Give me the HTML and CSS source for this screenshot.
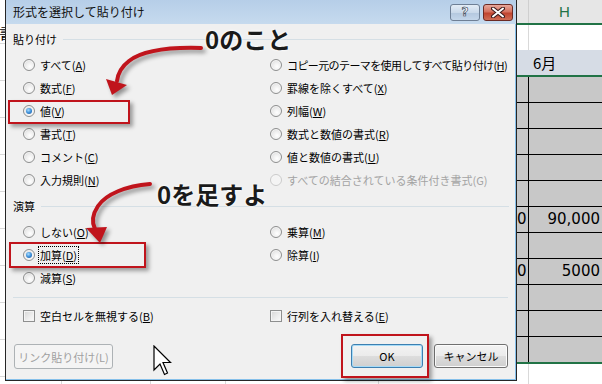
FILE: index.html
```html
<!DOCTYPE html>
<html lang="ja">
<head>
<meta charset="utf-8">
<link rel="stylesheet" href="styles.css">
</head>
<body>
<div class="screen">
  <div class="left-strip">
    <div class="ls-cell ls-first"><span class="ls-char">書</span></div>
    <div class="ls-cell"></div><div class="ls-cell"></div><div class="ls-cell"></div>
    <div class="ls-cell"></div><div class="ls-cell"></div><div class="ls-cell"></div>
    <div class="ls-cell"></div><div class="ls-cell"></div><div class="ls-cell"></div>
  </div>

  <div class="mid">
    <div class="dialog">
      <div class="titlebar">
        <span class="title">形式を選択して貼り付け</span>
        <div class="tbtns">
          <span class="tb help">?</span>
          <span class="tb close">
            <svg width="14" height="11" viewBox="0 0 14 11"><path d="M2 1.5 L12 9.5 M12 1.5 L2 9.5" stroke="#3a1a1a" stroke-width="4" stroke-linecap="round"/><path d="M2 1.5 L12 9.5 M12 1.5 L2 9.5" stroke="#fff" stroke-width="2" stroke-linecap="round"/></svg>
          </span>
        </div>
      </div>
      <div class="body">
        <div class="group-head"><span>貼り付け</span><i class="rule"></i></div>
        <div class="opts">
          <div class="opt"><span class="radio"></span><span>すべて(<u>A</u>)</span></div>
          <div class="opt"><span class="radio"></span><span class="tight">コピー元のテーマを使用してすべて貼り付け(<u>H</u>)</span></div>
          <div class="opt"><span class="radio"></span><span>数式(<u>F</u>)</span></div>
          <div class="opt"><span class="radio"></span><span>罫線を除くすべて(<u>X</u>)</span></div>
          <div class="opt"><span class="radio on"></span><span>値(<u>V</u>)</span></div>
          <div class="opt"><span class="radio"></span><span>列幅(<u>W</u>)</span></div>
          <div class="opt"><span class="radio"></span><span>書式(<u>T</u>)</span></div>
          <div class="opt"><span class="radio"></span><span>数式と数値の書式(<u>R</u>)</span></div>
          <div class="opt"><span class="radio"></span><span>コメント(<u>C</u>)</span></div>
          <div class="opt"><span class="radio"></span><span>値と数値の書式(<u>U</u>)</span></div>
          <div class="opt"><span class="radio"></span><span>入力規則(<u>N</u>)</span></div>
          <div class="opt disabled"><span class="radio"></span><span>すべての結合されている条件付き書式(G)</span></div>
        </div>

        <div class="group-head head2"><span>演算</span><i class="rule"></i></div>
        <div class="opts">
          <div class="opt"><span class="radio"></span><span>しない(<u>O</u>)</span></div>
          <div class="opt"><span class="radio"></span><span>乗算(<u>M</u>)</span></div>
          <div class="opt"><span class="radio on"></span><span class="focus">加算(<u>D</u>)</span></div>
          <div class="opt"><span class="radio"></span><span>除算(<u>I</u>)</span></div>
          <div class="opt"><span class="radio"></span><span>減算(<u>S</u>)</span></div>
        </div>

        <div class="sep"></div>

        <div class="opts checks">
          <div class="opt"><span class="check"></span><span>空白セルを無視する(<u>B</u>)</span></div>
          <div class="opt"><span class="check"></span><span>行列を入れ替える(<u>E</u>)</span></div>
        </div>

        <div class="buttons">
          <span class="btn link">リンク貼り付け(L)</span>
          <div class="btn-group">
            <span class="btn ok">OK</span>
            <span class="btn cancel">キャンセル</span>
          </div>
        </div>
      </div>
    </div>
    <div class="below">
      <i class="vline v1"></i><i class="vline v2"></i><i class="vline v3"></i><i class="vline v4"></i>
    </div>
  </div>

  <div class="sheet">
    <div class="s-head"><div class="c1"></div><div class="c2">H</div></div>
    <div class="s-white"><div class="c1"></div><div class="c2"></div></div>
    <div class="s-month">6月</div>
    <div class="s-gray">
      <div class="gr"><div class="c1"></div><div class="c2"></div></div>
      <div class="gr"><div class="c1"></div><div class="c2"></div></div>
      <div class="gr"><div class="c1"></div><div class="c2"></div></div>
      <div class="gr"><div class="c1"></div><div class="c2"></div></div>
      <div class="gr"><div class="c1"></div><div class="c2"></div></div>
      <div class="gr"><div class="c1">0</div><div class="c2">90,000</div></div>
      <div class="gr"><div class="c1"></div><div class="c2"></div></div>
      <div class="gr"><div class="c1">0</div><div class="c2">5000</div></div>
      <div class="gr"><div class="c1"></div><div class="c2"></div></div>
      <div class="gr"><div class="c1"></div><div class="c2"></div></div>
      <div class="gr last"><div class="c1"></div><div class="c2"></div></div>
    </div>
    <div class="s-bottom"><div class="c1"></div><div class="c2"></div></div>
  </div>

  <!-- annotations over the screenshot -->
  <div class="mark mark-v"></div>
  <div class="mark mark-d"></div>
  <div class="mark mark-ok"></div>
  <span class="note note1">0のこと</span>
  <span class="note note2">0を足すよ</span>
  <svg class="arrows" width="602" height="384" viewBox="0 0 602 384">
    <path d="M201,48 C168,47 142,51 129,61 C121,67 118,73 117,81" fill="none" stroke="#c0141c" stroke-width="4" stroke-linecap="round"/>
    <polygon points="106,79 127,85 112,95" fill="#c0141c"/>
    <path d="M150,184 C126,186 106,194 98,206 C92,215 92,223 95,229" fill="none" stroke="#c0141c" stroke-width="4" stroke-linecap="round"/>
    <polygon points="86,228 107,227 100,243" fill="#c0141c"/>
  </svg>
  <svg class="cursor" width="19" height="31" viewBox="0 0 19 31">
    <polygon points="1,1 1,25 7,19 11.5,29.5 14.5,28 10,17.5 17.5,17.5" fill="#fff" stroke="#000" stroke-width="1.2" stroke-linejoin="miter"/>
  </svg>
</div>
</body>
</html>
```

FILE: styles.css
```css
html, body {
  margin: 0;
  padding: 0;
  background: #fff;
}

.screen {
  position: relative;
  width: 602px;
  height: 384px;
  overflow: hidden;
  display: flex;
  font-family: "Noto Sans CJK JP", "Noto Sans", sans-serif;
  color: #000;
}

/* ---------- left sliver of the sheet ---------- */
.left-strip {
  width: 5px;
  flex: none;
  display: flex;
  flex-direction: column;
  background: #fff;
}
.ls-cell {
  height: 37px;
  border-bottom: 1px solid #d9d9d9;
  box-sizing: border-box;
  flex: none;
}
.ls-first {
  height: 44px;
  display: flex;
  justify-content: flex-end;
  align-items: flex-start;
  overflow: hidden;
  padding-top: 25px;
}
.ls-char {
  flex: none;
  font-size: 15px;
  line-height: 15px;
  margin-right: -9px;
}

/* ---------- middle column: dialog + sheet below ---------- */
.mid {
  width: 512px;
  flex: none;
  display: flex;
  flex-direction: column;
}
.dialog {
  height: 381px;
  box-sizing: border-box;
  border: 1px solid #262626;
  border-top: 0;
  background: #f0f0f0;
  box-shadow: inset -1px -1px 0 #86c0ea;
  display: flex;
  flex-direction: column;
}
.below {
  flex: 1;
  position: relative;
  background: #fff;
}
.vline {
  position: absolute;
  top: 0;
  bottom: 0;
  width: 1px;
  background: #d9d9d9;
}
.v1 { left: 56px; }
.v2 { left: 145px; }
.v3 { left: 220px; }
.v4 { left: 373px; }

.titlebar {
  height: 24px;
  flex: none;
  display: flex;
  justify-content: space-between;
  align-items: flex-start;
  background: linear-gradient(#b6cee8, #c6daee);
  padding-left: 7px;
  padding-right: 3px;
}
.title {
  font-size: 12px;
  line-height: 24px;
  color: #111;
}
.tbtns {
  display: flex;
  gap: 3px;
  margin-top: 4px;
}
.tb {
  width: 30px;
  height: 17px;
  box-sizing: border-box;
  border-radius: 3px;
  display: flex;
  align-items: center;
  justify-content: center;
}
.help {
  border: 1px solid #6e7f95;
  background: linear-gradient(#e3ecf6 0%, #cad9ea 50%, #b3c7de 51%, #c4d6ea 100%);
  color: #fff;
  font-family: "DejaVu Sans", sans-serif;
  font-weight: bold;
  font-size: 12px;
  line-height: 15px;
  -webkit-text-stroke: 0.6px #2c3a4c;
}
.close {
  border: 1px solid #6b2a24;
  background: linear-gradient(#e8a89b 0%, #d4715f 45%, #c0442f 55%, #cf6e56 100%);
}

.body {
  flex: 1;
  padding: 8px 7px 0 7px;
  font-size: 11px;
}

.group-head {
  height: 14px;
  display: flex;
  align-items: center;
  gap: 6px;
  font-size: 11px;
  line-height: 14px;
}
.head2 {
  margin-top: 8px;
}
.rule {
  flex: 1;
  height: 1px;
  background: #d5dfe5;
}

.opts {
  display: grid;
  grid-template-columns: 247px 1fr;
  margin-left: 10px;
  margin-top: 7px;
}
.opt {
  height: 23px;
  display: flex;
  align-items: center;
  gap: 5px;
  line-height: 14px;
  white-space: nowrap;
}
.opt u {
  text-decoration: underline;
  text-underline-offset: 1px;
}
.opt .tight {
  letter-spacing: -0.6px;
}
.opt.disabled {
  color: #a3a3a3;
}

.radio {
  width: 12px;
  height: 12px;
  box-sizing: border-box;
  border-radius: 50%;
  border: 1px solid #8e8f8f;
  background: radial-gradient(circle at 60% 65%, #ffffff 0%, #eeeeee 45%, #d2d2d2 100%);
  box-shadow: inset 0 0 0 1px #f6f6f6;
  display: flex;
  align-items: center;
  justify-content: center;
  flex: none;
}
.disabled .radio {
  border-color: #cbcbcb;
  background: #f4f4f4;
}
.radio.on::after {
  content: "";
  width: 6px;
  height: 6px;
  border-radius: 50%;
  background: radial-gradient(circle at 40% 35%, #a8dcff 0%, #3d8fd8 50%, #1a4f95 100%);
}

.check {
  width: 12px;
  height: 12px;
  box-sizing: border-box;
  border: 1px solid #8e8f8f;
  background: linear-gradient(135deg, #d6d6d6 0%, #eeeeee 60%, #fafafa 100%);
  box-shadow: inset 0 0 0 1px #f4f4f4;
  flex: none;
}

.focus {
  outline: 1px dotted #000;
  outline-offset: 1px;
}

.sep {
  height: 1px;
  background: #d5dfe5;
  margin-top: 8px;
  margin-right: 1px;
}
.checks {
  margin-top: 6px;
}

.buttons {
  margin-top: 17px;
  display: flex;
  justify-content: space-between;
  align-items: flex-start;
  padding-left: 1px;
  padding-right: 1px;
}
.btn-group {
  display: flex;
  gap: 11px;
}
.btn {
  height: 24px;
  box-sizing: border-box;
  border-radius: 3px;
  border: 1px solid #707070;
  background: linear-gradient(#f3f3f3 0%, #ebebeb 50%, #dddddd 51%, #cfcfcf 100%);
  display: flex;
  align-items: center;
  justify-content: center;
  font-size: 11px;
  line-height: 14px;
  box-shadow: inset 0 0 0 1px #fcfcfc;
}
.link {
  width: 99px;
  height: 25px;
  border-color: #adb2b5;
  background: #f4f4f4;
  color: #a0a0a0;
  box-shadow: none;
}
.ok {
  width: 72px;
  border-color: #3c7fb1;
  box-shadow: inset 0 0 0 1px #a6dbf7;
}
.cancel {
  width: 74px;
}

/* ---------- right part of the sheet ---------- */
.sheet {
  width: 85px;
  flex: none;
  display: flex;
  flex-direction: column;
  background: #fff;
  font-family: "Noto Sans CJK JP", sans-serif;
}
.sheet .c1 {
  width: 12px;
  flex: none;
  box-sizing: border-box;
}
.sheet .c2 {
  flex: 1;
}
.s-head {
  height: 25px;
  display: flex;
  background: #e6e6e6;
  border-bottom: 2px solid #217346;
  box-sizing: border-box;
}
.s-head .c1 {
  border-right: 1px solid #cfcfcf;
}
.s-head .c2 {
  text-align: center;
  color: #217346;
  font-family: "Liberation Sans", sans-serif;
  font-size: 15px;
  line-height: 23px;
  padding-right: 2px;
}
.s-white {
  height: 25px;
  display: flex;
}
.s-white .c1 {
  border-right: 1px solid #d9d9d9;
}
.s-month {
  height: 25px;
  background: #d6dce5;
  border-bottom: 2px solid #217346;
  font-size: 15px;
  line-height: 25px;
  padding-left: 16px;
}
.s-gray {
  background: #c8c8c8;
  display: flex;
  flex-direction: column;
  border-bottom: 2px solid #217346;
}
.gr {
  height: 26px;
  display: flex;
  border-bottom: 1px solid #000;
  box-sizing: border-box;
  font-family: "DejaVu Sans", sans-serif;
  font-size: 15px;
  line-height: 25px;
}
.gr.last {
  height: 25px;
  border-bottom: 0;
}
.gr .c1 {
  border-right: 1px solid #000;
  text-align: right;
  padding-right: 3px;
  overflow: hidden;
}
.gr .c2 {
  text-align: right;
  padding-right: 2px;
}
.s-bottom {
  flex: 1;
  display: flex;
}
.s-bottom .c1 {
  border-right: 1px solid #d9d9d9;
}

/* ---------- annotation overlays ---------- */
.mark {
  position: absolute;
  box-sizing: border-box;
  border: 2px solid #c0141c;
  box-shadow: 3px 3px 4px rgba(0, 0, 0, 0.35);
}
.mark-v { left: 8px; top: 100px; width: 122px; height: 24px; }
.mark-d { left: 9px; top: 242px; width: 137px; height: 26px; }
.mark-ok { left: 341px; top: 334px; width: 88px; height: 44px; }

.note {
  position: absolute;
  font-family: "Noto Sans CJK JP", sans-serif;
  font-weight: bold;
  font-size: 24px;
  line-height: 28px;
  color: #1a1a1a;
  text-shadow: 0 0 2px #fff, 0 0 3px #fff;
  white-space: nowrap;
}
.note1 { left: 205px; top: 25px; }
.note2 { left: 157px; top: 180px; }

.arrows {
  position: absolute;
  left: 0;
  top: 0;
  filter: drop-shadow(3px 3px 2px rgba(0, 0, 0, 0.4));
}
.cursor {
  position: absolute;
  left: 153px;
  top: 345px;
}
```
